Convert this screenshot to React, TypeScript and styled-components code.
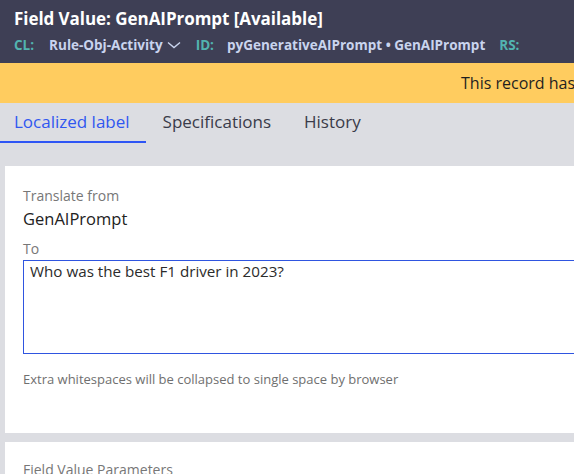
import React from "react";
import styled, { createGlobalStyle } from "styled-components";

const Global = createGlobalStyle`
  html, body { margin: 0; padding: 0; }
  body { font-family: "Open Sans", "Liberation Sans", sans-serif; background: #dcdde2; width: 574px; height: 474px; overflow: hidden; }
`;

const Page = styled.div`
  width: 574px;
  height: 474px;
  overflow: hidden;
  display: flex;
  flex-direction: column;
  background: #dcdde2;
`;

const Header = styled.header`
  background: #3e3f55;
  height: 63px;
  box-sizing: border-box;
  padding: 7px 0 0 14px;
  display: flex;
  flex-direction: column;
  gap: 6px;
  white-space: nowrap;
  flex-shrink: 0;
  overflow: hidden;
`;

const Title = styled.h1`
  margin: 0;
  font-size: 17px;
  line-height: 23px;
  font-weight: 700;
  color: #ffffff;
  letter-spacing: -0.05px;
`;

const Meta = styled.div`
  display: flex;
  align-items: center;
  font-size: 13.5px;
  line-height: 18px;
  font-weight: 700;
`;

const MetaKey = styled.span<{ $gap: number }>`
  color: #52b3b0;
  margin-right: ${(p) => p.$gap}px;
`;

const MetaVal = styled.span`
  color: #c9d4ee;
  display: inline-flex;
  align-items: center;
  margin-right: 14px;
`;

const Banner = styled.div`
  background: #ffcc5f;
  height: 40px;
  flex-shrink: 0;
  display: flex;
  align-items: center;
  padding-left: 461px;
  white-space: nowrap;
  font-size: 16px;
  color: #1f1f1f;
  overflow: hidden;
`;

const Tabs = styled.nav`
  display: flex;
  gap: 3px;
  height: 40px;
  flex-shrink: 0;
`;

const Tab = styled.div<{ $active?: boolean }>`
  padding: 0 16px 0 14px;
  font-size: 17px;
  line-height: 38px;
  color: ${(p) => (p.$active ? "#3057f0" : "#3a3b4a")};
  border-bottom: 2px solid ${(p) => (p.$active ? "#2e55f5" : "transparent")};
`;

const Body = styled.main`
  padding: 23px 0 0 5px;
  display: flex;
  flex-direction: column;
  gap: 9px;
`;

const Card = styled.section`
  background: #ffffff;
  padding: 18px 0 0 18px;
  box-sizing: border-box;
`;

const MainCard = styled(Card)`
  height: 267px;
  padding-top: 20px;
`;

const Label = styled.div`
  font-size: 14px;
  line-height: 20px;
  color: #777777;
`;

const Value = styled.div`
  font-size: 16.5px;
  line-height: 22px;
  color: #222222;
  margin: 2px 0 9px;
`;

const TextArea = styled.div`
  margin-top: 1px;
  height: 94px;
  box-sizing: border-box;
  border: 1px solid #2f55e0;
  border-right: none;
  padding: 0 0 0 6px;
  font-size: 15.2px;
  line-height: 20px;
  color: #2b2b2b;
`;

const Hint = styled.div`
  margin-top: 16px;
  font-size: 13px;
  line-height: 18px;
  color: #6f6f6f;
  white-space: nowrap;
`;

const SectionTitle = styled.div`
  font-size: 14px;
  line-height: 20px;
  color: #777777;
`;

const Chevron = () => (
  <svg width="14" height="8" viewBox="0 0 14 8" style={{ marginLeft: 4, marginRight: 1 }}>
    <path d="M1 1.5 L7 6.5 L13 1.5" fill="none" stroke="#c9d4ee" strokeWidth="1.4" />
  </svg>
);

export default function App() {
  return (
    <Page>
      <Global />
      <Header>
        <Title>Field Value: GenAIPrompt [Available]</Title>
        <Meta>
          <MetaKey $gap={15}>CL:</MetaKey>
          <MetaVal>
            Rule-Obj-Activity
            <Chevron />
          </MetaVal>
          <MetaKey $gap={13}>ID:</MetaKey>
          <MetaVal>pyGenerativeAIPrompt • GenAIPrompt</MetaVal>
          <MetaKey $gap={0}>RS:</MetaKey>
        </Meta>
      </Header>
      <Banner>This record has been checked out</Banner>
      <Tabs>
        <Tab $active>Localized label</Tab>
        <Tab>Specifications</Tab>
        <Tab>History</Tab>
      </Tabs>
      <Body>
        <MainCard>
          <Label>Translate from</Label>
          <Value>GenAIPrompt</Value>
          <Label>To</Label>
          <TextArea>Who was the best F1 driver in 2023?</TextArea>
          <Hint>Extra whitespaces will be collapsed to single space by browser</Hint>
        </MainCard>
        <Card>
          <SectionTitle>Field Value Parameters</SectionTitle>
        </Card>
      </Body>
    </Page>
  );
}
